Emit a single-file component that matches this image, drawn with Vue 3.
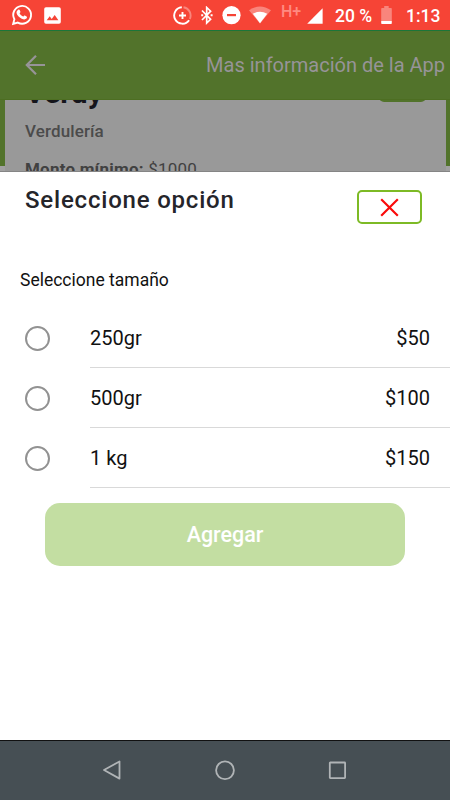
<script setup>
import { ref } from 'vue'

const options = [
  { label: '250gr', price: '$50' },
  { label: '500gr', price: '$100' },
  { label: '1 kg', price: '$150' },
]
const selected = ref(null)
</script>

<template>
  <div class="phone">
    <div class="status">
      <svg class="whatsapp" width="22" height="22" viewBox="0 0 22 22">
        <path d="M2.200 19.800 3.400 15.200A8.900 8.900 0 1 1 6.800 18.600Z" fill="none" stroke="#fff" stroke-width="1.900" />
        <path d="M7.200 5.800c.7-.6 1.300-.3 1.600.4l.6 1.500c.2.5-.2.900-.8 1.600.9 1.700 2 2.600 3.700 3.300.7-.8 1-1.300 1.500-1.100l1.800.9c.7.4.3 1.600-.2 2.200-1.100 1.100-2.800 1-4.700.1-2.700-1.200-4.600-3.500-5.100-5.400-.3-1.500.4-2.700 1.600-3.500Z" fill="#fff" />
      </svg>
      <svg class="picture" width="17" height="17" viewBox="0 0 17 17">
        <path fill-rule="evenodd" d="M2 .2h13A1.800 1.800 0 0 1 16.800 2v13a1.800 1.800 0 0 1-1.800 1.800H2A1.800 1.800 0 0 1 .2 15V2A1.800 1.800 0 0 1 2 .2ZM2.700 13.200H14.400L10.700 8 7.700 11.900 5.700 9.300Z" fill="#fff" />
      </svg>
      <svg class="saver" width="19" height="19" viewBox="0 0 19 19">
        <path d="M10.500 1.300A8.300 8.300 0 0 1 16.800 13" fill="none" stroke="#fff" stroke-opacity=".35" stroke-width="1.900" />
        <path d="M8.800 1.300A8.200 8.200 0 1 0 16.100 14.200M9.500 6v7M6 9.500h7" fill="none" stroke="#fff" stroke-width="1.900" />
      </svg>
      <svg class="bluetooth" width="13" height="19" viewBox="0 0 13 19">
        <path d="M2 4.500 10.600 13.300 6.700 17V1.500L10.600 5.200 2 14" fill="none" stroke="#fff" stroke-width="1.700" />
        <path d="M1.200 8.300h2v2h-2zM10.600 8.300h2v2h-2z" fill="#fff" />
      </svg>
      <svg class="dnd" width="19" height="19" viewBox="0 0 19 19">
        <circle cx="9.500" cy="9.200" r="9.100" fill="#fff" />
        <path d="M5 8h9v2.200H5z" fill="#f64436" />
      </svg>
      <svg class="wifi" width="22" height="18" viewBox="0 0 22 18">
        <path d="M0 4.300Q11-3.300 22 4.300L11 17.500Z" fill="#fff" fill-opacity=".35" />
        <path d="M3.800 7.800Q11 3.800 18.200 7.800L11 17.200Z" fill="#fff" />
      </svg>
      <span class="network">H+</span>
      <svg class="signal" width="16" height="16" viewBox="0 0 16 16">
        <path d="M15.600.2V15.700H.2Z" fill="#fff" />
      </svg>
      <span class="percent">20 %</span>
      <svg class="battery" width="11" height="19" viewBox="0 0 11 19">
        <path d="M3.200 0h4.500v2h2.300q.8 0 .8.800V15H.2V2.800Q.2 2 1 2h2.200z" fill="#fff" fill-opacity=".35" />
        <path d="M.2 15h10.600v2.200q0 .8-.8.800H1q-.8 0-.8-.8z" fill="#fff" />
      </svg>
      <span class="clock">1:13</span>
    </div>

    <header class="header">
      <svg width="22" height="22" viewBox="0 0 22 22">
        <path d="M21 11H2.800M12 1.800 2.800 11l9.200 9.200" fill="none" stroke="#979498" stroke-width="2.200" />
      </svg>
      <span>Mas información de la App</span>
    </header>

    <main class="backdrop">
      <section class="card">
        <div class="shop"><span>Verdy</span></div>
        <i class="badge"></i>
        <div class="category">Verdulería</div>
        <div class="minimum"><b>Monto mínimo:</b> $1000</div>
      </section>
    </main>

    <section class="sheet">
      <div class="sheet-head">
        <h1>Seleccione opción</h1>
        <button class="close" aria-label="Cerrar">
          <svg width="19" height="19" viewBox="0 0 19 19">
            <path d="M1.200 1.200 17.800 17.800M17.800 1.200 1.200 17.800" stroke="#fa0b0b" stroke-width="2.200" />
          </svg>
        </button>
      </div>
      <p class="subtitle">Seleccione tamaño</p>
      <div v-for="o in options" :key="o.label" class="row" @click="selected = o.label">
        <span class="radio" :class="{ on: selected === o.label }"></span>
        <div class="info"><span>{{ o.label }}</span><span>{{ o.price }}</span></div>
      </div>
      <button class="add">Agregar</button>
    </section>

    <nav class="nav">
      <svg width="22" height="22" viewBox="0 0 22 22">
        <path d="M18.500 1.500V18.600L3 10Z" fill="none" stroke="#b0b4b6" stroke-width="1.800" stroke-linejoin="round" />
      </svg>
      <svg width="22" height="22" viewBox="0 0 22 22">
        <circle cx="11" cy="10.300" r="8.900" fill="none" stroke="#b0b4b6" stroke-width="1.800" />
      </svg>
      <svg width="22" height="22" viewBox="0 0 22 22">
        <rect x="2.800" y="2.500" width="15.300" height="15.600" rx=".5" fill="none" stroke="#b0b4b6" stroke-width="1.800" />
      </svg>
    </nav>
  </div>
</template>

<style>
body {
  margin: 0;
}
</style>

<style scoped>
.phone {
  width: 450px;
  height: 800px;
  display: flex;
  flex-direction: column;
  overflow: hidden;
  background: #fff;
  font-family: Roboto, "Liberation Sans", sans-serif;
}
.phone * {
  box-sizing: border-box;
}
svg {
  display: block;
  flex: none;
}
.status {
  height: 30px;
  flex: none;
  display: flex;
  align-items: flex-start;
  background: #f64436;
  color: #fff;
  white-space: nowrap;
}
.whatsapp { margin: 4px 0 0 11px; }
.picture { margin: 7px 0 0 11px; }
.saver { margin: 6px 0 0 112px; }
.bluetooth { margin: 6px 0 0 8px; }
.dnd { margin: 6px 0 0 9px; }
.wifi { margin: 6px 0 0 8px; }
.network {
  width: 26px;
  margin: 2px 0 0 10px;
  font-size: 16px;
  line-height: 19px;
  font-weight: 500;
  color: #ff8b82;
}
.signal { margin: 8px 0 0 0; }
.percent {
  width: 47px;
  margin: 5px 0 0 12px;
  font-size: 17.5px;
  line-height: 22px;
  font-weight: 500;
}
.battery { margin: 6px 0 0 -1px; }
.clock {
  margin: 5px 0 0 14px;
  font-size: 17.5px;
  line-height: 22px;
  font-weight: 500;
}
.header {
  height: 70px;
  flex: none;
  display: flex;
  align-items: center;
  justify-content: space-between;
  padding: 0 5px 0 24px;
  background: #52732b;
  border-top: 1px solid #1b753a;
  border-bottom: 1px solid #4d6e22;
  color: #979498;
  font-size: 20px;
}
.backdrop {
  height: 71px;
  flex: none;
  padding: 0 4.5px;
  background: linear-gradient(#52732b 66px, #a1a1a1 66px);
  overflow: hidden;
}
.card {
  position: relative;
  height: 71px;
  padding-left: 20.5px;
  background: #999;
  color: #414141;
  overflow: hidden;
}
.shop {
  height: 20px;
  display: flex;
  align-items: flex-end;
  color: #15151b;
  font-size: 30px;
  line-height: 36px;
  font-weight: 700;
}
.shop span {
  margin-bottom: 9px;
}
.badge {
  position: absolute;
  right: 20px;
  top: -20px;
  width: 47px;
  height: 22px;
  border-radius: 5px;
  background: #52732b;
}
.category {
  font-size: 17px;
  line-height: 22px;
  font-weight: 500;
  letter-spacing: 0.12px;
  color: #4b4b4b;
}
.minimum {
  margin-top: 16px;
  font-size: 17px;
  line-height: 22px;
  letter-spacing: 0.22px;
}
.minimum b {
  font-weight: 700;
}
.sheet {
  flex: 1;
  min-height: 0;
  border-top: 1px solid #858585;
  background: #fff;
  color: #111;
}
.sheet-head {
  height: 90px;
  display: flex;
  justify-content: space-between;
  padding: 13px 28px 0 25px;
}
h1 {
  margin: 0;
  font-size: 24px;
  line-height: 30px;
  font-weight: 500;
  letter-spacing: 0.8px;
  color: #25252a;
}
.close {
  width: 65px;
  height: 34px;
  margin-top: 5px;
  padding: 0;
  display: flex;
  align-items: center;
  justify-content: center;
  border: 2px solid #7dba25;
  border-radius: 5px;
  background: #fff;
}
.subtitle {
  height: 46px;
  margin: 0;
  padding: 7px 0 0 20px;
  font-size: 17.5px;
  line-height: 22px;
}
.row {
  height: 60px;
  display: flex;
  align-items: center;
  padding-left: 25px;
  font-size: 20px;
}
.radio {
  width: 25px;
  height: 25px;
  flex: none;
  margin-right: 40px;
  border: 2px solid #929292;
  border-radius: 50%;
}
.radio.on {
  border-color: #7dba25;
  border-width: 7px;
}
.info {
  flex: 1;
  height: 60px;
  display: flex;
  align-items: center;
  justify-content: space-between;
  padding-right: 20px;
  border-bottom: 1px solid #d9d9d9;
}
.add {
  display: block;
  width: 360px;
  height: 63px;
  margin: 15px auto 0;
  padding: 0;
  border: 0;
  border-radius: 15px;
  background: #c3dea2;
  color: #fff;
  font: 500 21.5px Roboto, "Liberation Sans", sans-serif;
}
.nav {
  height: 60px;
  flex: none;
  display: flex;
  align-items: center;
  justify-content: center;
  gap: 91px;
  border-top: 1px solid #111;
  background: #464f54;
}
</style>
